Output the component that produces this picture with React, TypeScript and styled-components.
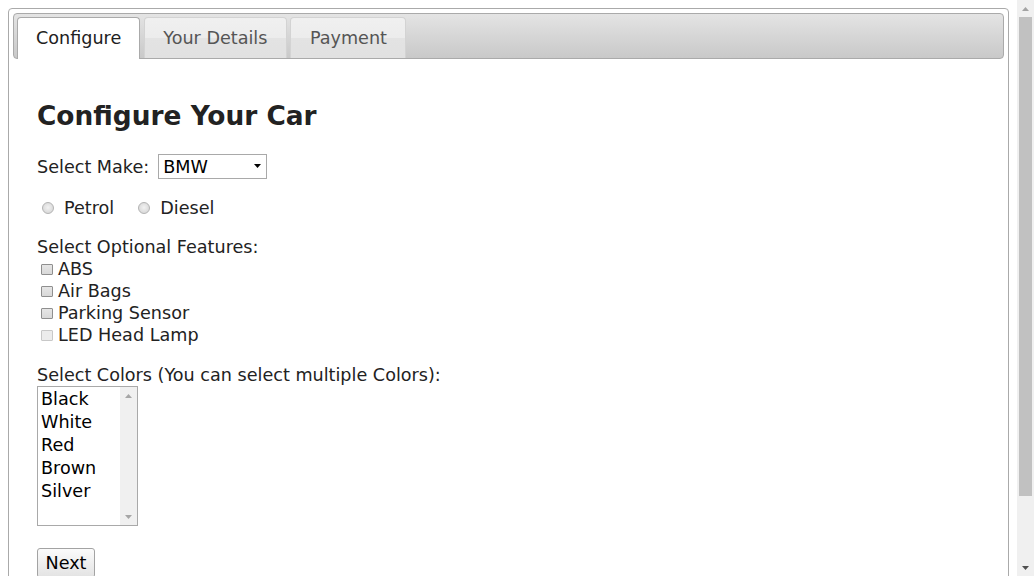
import * as React from 'react';
import styled, { createGlobalStyle, css } from 'styled-components';

const GlobalStyle = createGlobalStyle`
    html, body {
        margin: 0;
        height: 100%;
        overflow: hidden;
    }
    body {
        font-family: "DejaVu Sans", Verdana, sans-serif;
        font-size: 17.6px;
        color: #222222;
        background: #ffffff;
    }
`

const features = [
    { name: 'ABS', disabled: false },
    { name: 'Air Bags', disabled: false },
    { name: 'Parking Sensor', disabled: false },
    { name: 'LED Head Lamp', disabled: true },
];

const colors = ['Black', 'White', 'Red', 'Brown', 'Silver'];

const tabs = ['Configure', 'Your Details', 'Payment'];

const Arrow: React.FC<{ down?: boolean, color: string }> = ({ down, color }) => (
    <svg width="7" height="4" viewBox="0 0 7 4">
        <path d={down ? 'M0 0 L7 0 L3.5 4 Z' : 'M0 4 L3.5 0 L7 4 Z'} fill={color} />
    </svg>
)

const App: React.FC = () => {

    const [active, setActive] = React.useState(0);
    const [picked, setPicked] = React.useState<string[]>([]);

    const toggleColor = (color: string) => {
        setPicked(prev => prev.includes(color) ? prev.filter(c => c !== color) : [...prev, color]);
    }

    return (
        <>
            <GlobalStyle />
            <Viewport>
                <Page>
                    <TabsRoot>
                        <TabNav>
                            {
                                tabs.map((tab, index) => (
                                    <Tab key={tab} active={index === active} onClick={() => setActive(index)}>
                                        {tab}
                                    </Tab>
                                ))
                            }
                        </TabNav>
                        <Panel>
                            <Heading>Configure Your Car</Heading>
                            <MakeRow>
                                <span>Select Make:</span>
                                <SelectWrap>
                                    <MakeSelect defaultValue="BMW">
                                        <option>BMW</option>
                                        <option>Audi</option>
                                        <option>Mercedes</option>
                                    </MakeSelect>
                                    <SelectArrow><Arrow down color="#000000" /></SelectArrow>
                                </SelectWrap>
                            </MakeRow>
                            <FuelRow>
                                <Radio type="radio" name="fuel" id="petrol" />
                                <RadioLabel htmlFor="petrol">Petrol</RadioLabel>
                                <Radio type="radio" name="fuel" id="diesel" second />
                                <RadioLabel htmlFor="diesel">Diesel</RadioLabel>
                            </FuelRow>
                            <SectionLabel>Select Optional Features:</SectionLabel>
                            {
                                features.map(item => (
                                    <CheckRow key={item.name}>
                                        <Check type="checkbox" disabled={item.disabled} />
                                        <span>{item.name}</span>
                                    </CheckRow>
                                ))
                            }
                            <ColorsLabel>Select Colors (You can select multiple Colors):</ColorsLabel>
                            <ListBox role="listbox" aria-multiselectable="true">
                                <OptionList>
                                    {
                                        colors.map(color => (
                                            <ListOption
                                                key={color}
                                                role="option"
                                                selected={picked.includes(color)}
                                                onClick={() => toggleColor(color)}
                                            >
                                                {color}
                                            </ListOption>
                                        ))
                                    }
                                </OptionList>
                                <MiniScroll>
                                    <ScrollButton><Arrow color="#a6a6a6" /></ScrollButton>
                                    <ScrollButton><Arrow down color="#a6a6a6" /></ScrollButton>
                                </MiniScroll>
                            </ListBox>
                            <ButtonRow>
                                <NextButton type="button">Next</NextButton>
                            </ButtonRow>
                        </Panel>
                    </TabsRoot>
                </Page>
                <ScrollBar>
                    <ScrollButton><Arrow color="#a3a3a3" /></ScrollButton>
                    <Track>
                        <Thumb />
                    </Track>
                    <ScrollButton><Arrow down color="#505050" /></ScrollButton>
                </ScrollBar>
            </Viewport>
        </>
    )
}

export default App;

const Viewport = styled.div`
    display: flex;
    height: 100vh;
    overflow: hidden;
`

const Page = styled.div`
    flex: 1;
    min-width: 0;
    padding: 8px;
    overflow: hidden;
`

const ScrollBar = styled.div`
    width: 17px;
    flex-shrink: 0;
    display: flex;
    flex-direction: column;
    background: #f0f0f0;
`

const ScrollButton = styled.div`
    height: 17px;
    flex-shrink: 0;
    display: flex;
    align-items: center;
    justify-content: center;
`

const Track = styled.div`
    flex: 1;
    display: flex;
    flex-direction: column;
`

const Thumb = styled.div`
    height: 479px;
    margin: 0 2px;
    background: #c1c1c1;
`

const TabsRoot = styled.div`
    border: 1px solid #aaaaaa;
    border-radius: 4px;
    padding: 4px;
    background: #ffffff;
`

const TabNav = styled.div`
    display: flex;
    align-items: flex-start;
    height: 41px;
    padding: 3px 3px 0 3px;
    border: 1px solid #aaaaaa;
    border-radius: 4px;
    background: linear-gradient(to bottom, #e4e4e4 0%, #d6d6d6 50%, #c9c9c9 100%);
`

const Tab = styled.div<{ active: boolean }>`
    box-sizing: border-box;
    height: 41px;
    margin-right: 3.5px;
    padding: 9px 18.5px 0 18.5px;
    line-height: 22px;
    border: 1px solid #d3d3d3;
    border-bottom: none;
    border-radius: 4px 4px 0 0;
    background: linear-gradient(to bottom, #f0f0f0 0%, #ececec 50%, #e3e3e3 51%, #e1e1e1 100%);
    color: #555555;
    cursor: pointer;
    white-space: nowrap;
    &:first-child {
        padding: 9px 18px 0 18px;
    }
    ${({ active }) => active && css`
        height: 42px;
        margin-bottom: -1px;
        position: relative;
        border-color: #aaaaaa;
        background: #ffffff;
        color: #212121;
    `}
`

const Panel = styled.div`
    padding: 18px 24px 60px 24px;
`

const Heading = styled.h2`
    margin: 24px 0 23px 0;
    font-size: 26.4px;
    line-height: 30px;
    font-weight: bold;
    color: #222222;
`

const MakeRow = styled.div`
    display: flex;
    align-items: center;
    height: 25px;
    gap: 9px;
`

const SelectWrap = styled.div`
    position: relative;
    display: flex;
`

const MakeSelect = styled.select`
    appearance: none;
    box-sizing: border-box;
    width: 109px;
    height: 25px;
    padding: 0 0 0 4px;
    border: 1px solid #a9a9a9;
    border-radius: 0;
    font-family: "DejaVu Sans", Verdana, sans-serif;
    font-size: 17.6px;
    color: #000000;
    background: #ffffff;
`

const SelectArrow = styled.span`
    position: absolute;
    right: 6px;
    top: 10px;
    display: flex;
    pointer-events: none;
`

const FuelRow = styled.div`
    display: flex;
    align-items: center;
    height: 22px;
    margin-top: 18px;
`

const Radio = styled.input<{ second?: boolean }>`
    appearance: none;
    box-sizing: border-box;
    width: 12px;
    height: 12px;
    margin: 0 0 0 ${({ second }) => second ? '24px' : '5px'};
    border: 1px solid #b3b3b3;
    border-radius: 50%;
    background: radial-gradient(circle at 50% 45%, #f2f2f2 0%, #e0e0e0 55%, #d2d2d2 100%);
`

const RadioLabel = styled.label`
    margin-left: 10px;
`

const SectionLabel = styled.div`
    height: 22px;
    line-height: 22px;
    margin-top: 17px;
`

const CheckRow = styled.div`
    display: flex;
    align-items: center;
    height: 22px;
    line-height: 22px;
`

const Check = styled.input`
    appearance: none;
    box-sizing: border-box;
    width: 12px;
    height: 11px;
    margin: 0 5px 0 4px;
    border: 1px solid #8f8f8f;
    border-radius: 1px;
    background: linear-gradient(to bottom, #e6e6e6, #d8d8d8);
    &:disabled {
        border-color: #c8c8c8;
        background: #ececec;
    }
`

const ColorsLabel = styled(SectionLabel)`
    margin-top: 18px;
`

const ListBox = styled.div`
    box-sizing: border-box;
    display: flex;
    width: 101px;
    height: 140px;
    border: 1px solid #a9a9a9;
    background: #ffffff;
`

const OptionList = styled.div`
    flex: 1;
    min-width: 0;
    padding-top: 1px;
`

const ListOption = styled.div<{ selected: boolean }>`
    height: 23px;
    line-height: 23px;
    padding: 0 3px;
    color: #000000;
    cursor: default;
    ${({ selected }) => selected && css`
        background: #cecece;
    `}
`

const MiniScroll = styled.div`
    width: 17px;
    display: flex;
    flex-direction: column;
    justify-content: space-between;
    background: #f0f0f0;
`

const ButtonRow = styled.div`
    margin-top: 22px;
`

const NextButton = styled.button`
    box-sizing: border-box;
    height: 30px;
    width: 58px;
    padding: 0;
    border: 1px solid #a3a3a3;
    border-radius: 3px;
    background: linear-gradient(to bottom, #fbfbfb, #e3e3e3);
    font-family: "DejaVu Sans", Verdana, sans-serif;
    font-size: 17.6px;
    color: #000000;
`
